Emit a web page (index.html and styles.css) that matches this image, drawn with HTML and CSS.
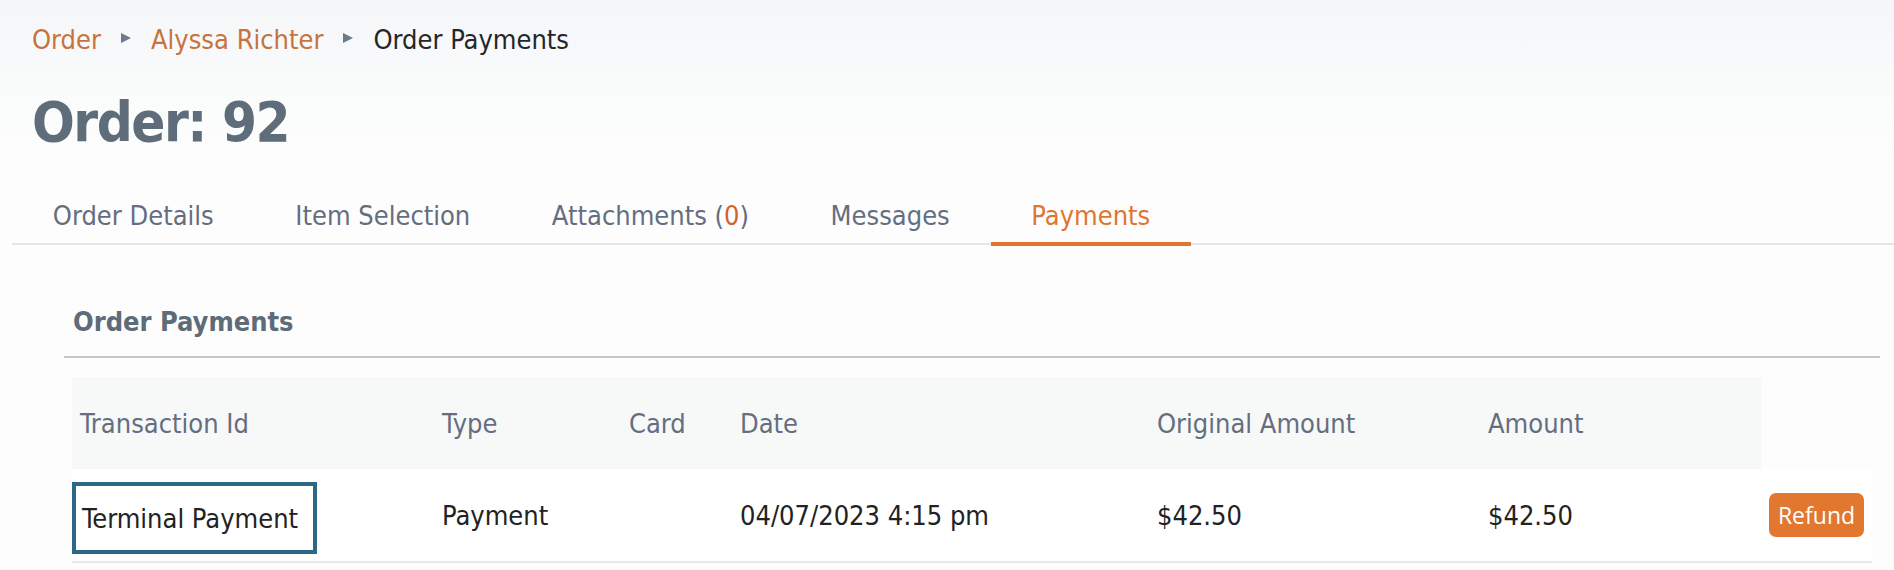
FILE: index.html
```html
<!DOCTYPE html>
<html>
<head>
<meta charset="utf-8">
<link rel="stylesheet" href="styles.css">
</head>
<body>
<div class="page">
  <nav class="crumbs">
    <a class="crumb-link">Order</a>
    <svg class="crumb-sep" width="10" height="10" viewBox="0 0 10 10"><polygon points="0,0 10,5 0,10" fill="#6b7b89"/></svg>
    <a class="crumb-link">Alyssa Richter</a>
    <svg class="crumb-sep" width="10" height="10" viewBox="0 0 10 10"><polygon points="0,0 10,5 0,10" fill="#6b7b89"/></svg>
    <span class="crumb-current">Order Payments</span>
  </nav>
  <h1 class="title">Order: 92</h1>
  <div class="tabs">
    <div class="tab">Order Details</div>
    <div class="tab">Item Selection</div>
    <div class="tab">Attachments (<span class="count">0</span>)</div>
    <div class="tab">Messages</div>
    <div class="tab tab-active">Payments</div>
  </div>
  <section class="section">
    <h2 class="section-title">Order Payments</h2>
    <div class="table">
      <div class="th">Transaction Id</div>
      <div class="th">Type</div>
      <div class="th">Card</div>
      <div class="th">Date</div>
      <div class="th">Original Amount</div>
      <div class="th">Amount</div>
      <div class="th th-empty"></div>

      <div class="td td-first"><span class="focus-box">Terminal Payment</span></div>
      <div class="td">Payment</div>
      <div class="td"></div>
      <div class="td">04/07/2023 4:15 pm</div>
      <div class="td">$42.50</div>
      <div class="td">$42.50</div>
      <div class="td td-action"><button class="btn-refund">Refund</button></div>
    </div>
  </section>
</div>
</body>
</html>
```
FILE: styles.css
```css
html, body {
  margin: 0;
  padding: 0;
}
body {
  background: linear-gradient(to bottom, #f5f6f8 0px, #fbfcfc 110px, #fdfdfd 160px, #fdfdfd 100%);
  font-family: "DejaVu Sans Condensed", "DejaVu Sans", sans-serif;
  font-stretch: condensed;
  font-size: 27px;
  color: #222;
  min-height: 570px;
}
.page {
  padding-top: 20px;
}
.crumbs {
  display: flex;
  align-items: center;
  gap: 20px;
  padding-left: 32px;
  height: 40px;
  line-height: 40px;
}
.crumb-link {
  color: #c8723c;
}
.crumb-current {
  color: #23262b;
}
.crumb-sep {
  display: block;
  margin-top: -4px;
}
.title {
  margin: 27px 0 0 32px;
  font-size: 56px;
  line-height: 70px;
  font-weight: bold;
  color: #5f6c79;
  letter-spacing: -1.5px;
}
.tabs {
  display: flex;
  margin: 28px 0 0 12px;
  border-bottom: 2px solid #e6e6e6;
  height: 58px;
  align-items: flex-end;
}
.tab {
  padding: 0 40.8px 6px;
  color: #646e80;
  border-bottom: 4px solid transparent;
  margin-bottom: -3px;
  line-height: 40px;
}
.tab-active {
  color: #e07531;
  border-bottom-color: #e07531;
}
.count {
  color: #d4622a;
}
.section {
  margin: 57px 14px 0 64px;
}
.section-title {
  margin: 0;
  padding: 0 0 14px 9px;
  font-size: 27px;
  line-height: 40px;
  font-weight: bold;
  color: #5e6b78;
  border-bottom: 2px solid #c6c6c6;
}
.table {
  display: grid;
  grid-template-columns: 362px 187px 111px 417px 331px 281px 111px;
  margin: 19px 0 0 8px;
}
.th {
  background: #f7f8f8;
  color: #646e80;
  height: 92px;
  display: flex;
  align-items: center;
  padding-left: 8px;
}
.th-empty {
  background: transparent;
}
.td {
  background: #fff;
  height: 92px;
  display: flex;
  align-items: center;
  padding-left: 8px;
  border-bottom: 2px solid #e8e8e8;
  color: #222;
}
.td-first {
  padding-left: 0;
  align-items: flex-start;
}
.focus-box {
  margin-top: 13px;
  box-sizing: border-box;
  width: 245px;
  height: 72px;
  border: 4px solid #2d6886;
  padding-left: 6px;
  display: flex;
  align-items: center;
}
.td-action {
  justify-content: flex-start;
}
.btn-refund {
  font-family: "Open Sans", "Noto Sans", sans-serif;
  font-size: 23px;
  color: #fff;
  background: #e27730;
  border: none;
  border-radius: 7px;
  width: 95px;
  height: 44px;
  padding: 0;
  line-height: 44px;
}
```
